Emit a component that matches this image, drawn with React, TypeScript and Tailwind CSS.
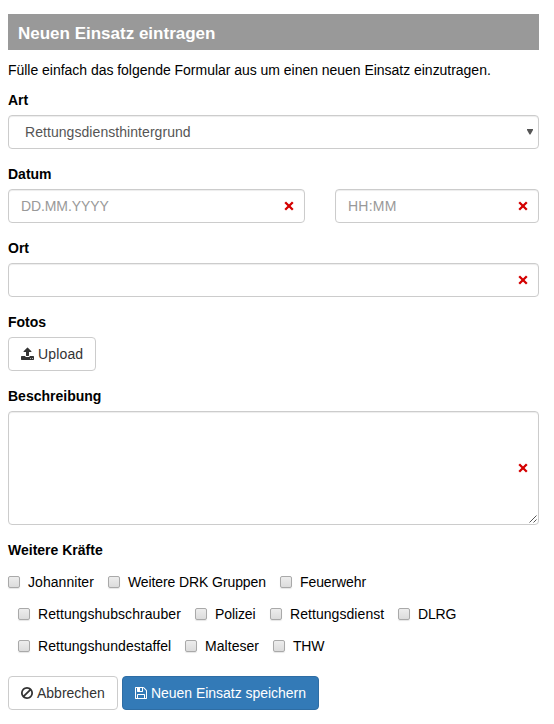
import type { ReactNode } from 'react'

const PATHS = {
  upload:
    'M1344 1472q0-26-19-45t-45-19-45 19-19 45 19 45 45 19 45-19 19-45zm256 0q0-26-19-45t-45-19-45 19-19 45 19 45 45 19 45-19 19-45zm128-224v320q0 40-28 68t-68 28h-1472q-40 0-68-28t-28-68v-320q0-40 28-68t68-28h427q21 56 70.5 92t110.500 36h256q61 0 110.500-36t70.500-92h427q40 0 68 28t28 68zm-325-648q-17 40-59 40h-256v448q0 26-19 45t-45 19h-256q-26 0-45-19t-19-45v-448h-256q-42 0-59-40-17-39 14-69l448-448q18-19 45-19t45 19l448 448q31 30 14 69z',
  save: 'M512 1536h768v-384h-768v384zm896 0h128v-896q0-14-10-38.500t-20-34.500l-281-281q-10-10-34-20t-39-10v416q0 40-28 68t-68 28h-576q-40 0-68-28t-28-68v-416h-128v1280h128v-416q0-40 28-68t68-28h832q40 0 68 28t28 68v416zm-384-928v-320q0-13-9.500-22.500t-22.500-9.500h-192q-13 0-22.500 9.500t-9.500 22.500v320q0 13 9.500 22.500t22.500 9.500h192q13 0 22.500-9.500t9.500-22.500zm640 32v928q0 40-28 68t-68 28h-1344q-40 0-68-28t-28-68v-1344q0-40 28-68t68-28h928q40 0 88 20t76 48l280 280q28 28 48 76t20 88z',
  ban: 'M1440 893q0-161-87-295l-754 753q137 89 297 89 111 0 211.500-43.500t173.500-116.500 116-174.500 43-212.500zm-999 299l755-754q-135-91-300-91-148 0-273 73t-198 199-73 274q0 162 89 299zm1223-299q0 157-61 300t-163.500 246-245 164-298.500 61-298.500-61-245-164-163.500-246-61-300 61-299.500 163.500-245.500 245-164 298.500-61 298.500 61 245 164 163.500 245.500 61 299.500z',
}

function Icon({ name, className = '', viewBox = '128 0 1536 1792' }: { name: keyof typeof PATHS; className?: string; viewBox?: string }) {
  return (
    <svg viewBox={viewBox} fill="currentColor" className={`shrink-0 ${className}`} aria-hidden="true">
      <path d={PATHS[name]} />
    </svg>
  )
}

function Cross() {
  return (
    <svg viewBox="0 0 10 10" className="mr-[2px] h-[10px] w-[10px] shrink-0 text-[#d40000]" stroke="currentColor" strokeWidth="2.3" aria-hidden="true">
      <path d="M1.200 1.200l7.600 7.600M8.800 1.200l-7.600 7.600" />
    </svg>
  )
}

const box =
  'flex w-full items-center rounded border border-[#ccc] bg-white shadow-[inset_0_1px_1px_rgba(0,0,0,0.075)]'

function Group({ label, children }: { label: string; children: ReactNode }) {
  return (
    <div className="mb-[15px]">
      <div className="mb-[5px] h-5 font-bold">{label}</div>
      {children}
    </div>
  )
}

function Field({ placeholder, label, tracking = '' }: { placeholder?: string; label: string; tracking?: string }) {
  return (
    <div className={`${box} h-[34px] pr-2 pl-3`}>
      <input
        aria-label={label}
        placeholder={placeholder}
        className={`h-5 min-w-0 flex-1 bg-transparent text-[#555] outline-none placeholder:text-[#999] ${tracking}`}
      />
      <Cross />
    </div>
  )
}

function Check({ label, className }: { label: string; className: string }) {
  return (
    <label className={`flex h-5 items-center whitespace-nowrap ${className}`}>
      <input
        type="checkbox"
        className="mr-2 h-3 w-3 shrink-0 appearance-none rounded-[2px] border border-[#a9a9a9] bg-linear-to-b from-[#ededed] to-[#dcdcdc] shadow-[0_1px_1px_rgba(0,0,0,0.1)]"
      />
      {label}
    </label>
  )
}

const rows = [
  {
    pad: '',
    items: [
      ['Johanniter', 'w-[100px] tracking-[0.05px]'],
      ['Weitere DRK Gruppen', 'w-[172px] tracking-[-0.1px]'],
      ['Feuerwehr', 'w-[90px] tracking-[-0.1px]'],
    ],
  },
  {
    pad: 'pl-[10px]',
    items: [
      ['Rettungshubschrauber', 'w-[177px] tracking-[0.06px]'],
      ['Polizei', 'w-[75px] tracking-[-0.1px]'],
      ['Rettungsdienst', 'w-[128px] tracking-[0.06px]'],
      ['DLRG', 'w-[70px] tracking-[-0.2px]'],
    ],
  },
  {
    pad: 'pl-[10px]',
    items: [
      ['Rettungshundestaffel', 'w-[167px] tracking-[0.06px]'],
      ['Malteser', 'w-[88px] tracking-[0.05px]'],
      ['THW', 'w-[60px] tracking-[-0.2px]'],
    ],
  },
]

export default function App() {
  return (
    <main className="h-[724px] w-[554px] bg-white pt-[14px] pr-[15px] pl-2 font-['Liberation_Sans',Arial,sans-serif] text-[14px] leading-5 text-black">
      <h1 className="flex h-9 items-center bg-[#999] pt-[3px] pl-[10px] text-[17px] font-bold text-white">Neuen Einsatz eintragen</h1>
      <p className="mt-[10px] mb-[10px] tracking-[-0.028px] whitespace-nowrap">
        Fülle einfach das folgende Formular aus um einen neuen Einsatz einzutragen.
      </p>

      <Group label="Art">
        <button type="button" className={`${box} h-[34px] justify-between pr-[5px] pl-4 tracking-[0.06px] text-[#555]`}>
          Rettungsdiensthintergrund
          <svg viewBox="0 0 6 6" className="h-[6px] w-[6px]" fill="currentColor" aria-hidden="true">
            <path d="M0 0h6v1L3.500 5.500h-1L0 1z" />
          </svg>
        </button>
      </Group>

      <Group label="Datum">
        <div className="flex gap-[30px]">
          <div className="w-[297px]">
            <Field label="Datum" placeholder="DD.MM.YYYY" tracking="tracking-[-0.1px]" />
          </div>
          <div className="w-[204px]">
            <Field label="Uhrzeit" placeholder="HH:MM" tracking="tracking-[0.25px]" />
          </div>
        </div>
      </Group>

      <Group label="Ort">
        <Field label="Ort" />
      </Group>

      <Group label="Fotos">
        <button type="button" className="flex h-[34px] w-[88px] items-center rounded border border-[#ccc] pl-3 tracking-[0.15px] text-[#333]">
          <Icon name="upload" className="mr-1 h-[14px] w-[13px]" viewBox="64 0 1664 1792" />
          Upload
        </button>
      </Group>

      <Group label="Beschreibung">
        <div className={`${box} relative h-[114px] justify-end pr-2`}>
          <Cross />
          <svg viewBox="0 0 8 8" className="absolute right-px bottom-px h-2 w-2" stroke="#444" strokeWidth="0.9" aria-hidden="true">
            <path d="M0.500 7.500l7-7M4.500 7.500l3-3" />
          </svg>
        </div>
      </Group>

      <div className="h-5 font-bold">Weitere Kräfte</div>
      <div className="mt-3 flex flex-col gap-3">
        {rows.map((row) => (
          <div key={row.items[0][0]} className={`flex ${row.pad}`}>
            {row.items.map(([label, className]) => (
              <Check key={label} label={label} className={className} />
            ))}
          </div>
        ))}
      </div>

      <div className="mt-5 flex gap-1">
        <button type="button" className="flex h-[34px] w-[110px] items-center rounded border border-[#ccc] pl-3 whitespace-nowrap text-[#333]">
          <Icon name="ban" className="mr-1 h-[14px] w-3" />
          Abbrechen
        </button>
        <button
          type="button"
          className="flex h-[34px] w-[197px] items-center rounded border border-[#2e6da4] bg-[#337ab7] pl-3 tracking-[-0.03px] whitespace-nowrap text-white"
        >
          <Icon name="save" className="mr-1 h-[14px] w-3" />
          Neuen Einsatz speichern
        </button>
      </div>
    </main>
  )
}
